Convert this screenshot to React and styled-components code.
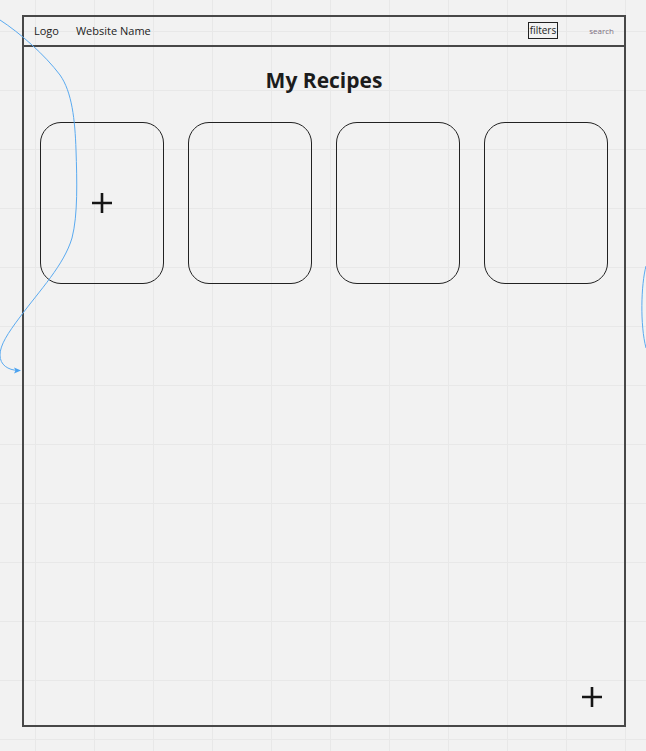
import React from 'react';
import styled, { createGlobalStyle } from 'styled-components';

const GlobalStyle = createGlobalStyle`
  html, body {
    margin: 0;
    padding: 0;
  }
  body {
    background-color: #f2f2f2;
    background-image:
      linear-gradient(to right, #e8e8e8 1px, transparent 1px),
      linear-gradient(to bottom, #e8e8e8 1px, transparent 1px);
    background-size: 59px 59px;
    background-position: 35px 31px;
    font-family: 'Open Sans', 'Liberation Sans', sans-serif;
    color: #1f1f1f;
  }
`;

const Canvas = styled.div`
  position: relative;
  width: 646px;
  height: 751px;
  overflow: hidden;
  padding: 15px 0 0 22px;
  box-sizing: border-box;
`;

const Frame = styled.div`
  position: relative;
  width: 604px;
  height: 712px;
  box-sizing: border-box;
  border: 2px solid #484848;
  display: flex;
  flex-direction: column;
`;

const TopBar = styled.div`
  display: flex;
  align-items: center;
  height: 30px;
  box-sizing: border-box;
  border-bottom: 2px solid #484848;
  padding: 0 10px 1px;
`;

const NavText = styled.span`
  font-size: 11px;
  color: #222;
  margin-right: ${(p) => p.gap || 0}px;
`;

const Spacer = styled.div`
  flex: 1;
`;

const FilterBox = styled.span`
  font-size: 10px;
  line-height: 15px;
  padding: 0 1px;
  border: 1px solid #222;
  color: #222;
  margin-right: 31px;
`;

const SearchText = styled.span`
  font-size: 8px;
  color: #7c6f80;
`;

const Title = styled.h1`
  margin: 19px 0 0;
  text-align: center;
  font-size: 21px;
  font-weight: 700;
  color: #1c1c1c;
  line-height: 28px;
`;

const CardGrid = styled.div`
  display: grid;
  grid-template-columns: repeat(4, 124px);
  gap: 24px;
  padding: 0 16px;
  margin-top: 28px;
`;

const Card = styled.div`
  height: 162px;
  box-sizing: border-box;
  border: 1.5px solid #222;
  border-radius: 21px;
  display: flex;
  align-items: center;
  justify-content: center;
`;

const Plus = styled.svg`
  width: 20px;
  height: 20px;
  display: block;
`;

const AddButton = styled.div`
  position: absolute;
  right: 22px;
  bottom: 18px;
`;

const Wires = styled.svg`
  position: absolute;
  left: 0;
  top: 0;
  pointer-events: none;
`;

const PlusIcon = () => (
  <Plus viewBox="0 0 20 20">
    <path d="M10 0V20M0 10H20" stroke="#151515" strokeWidth="2.6" fill="none" />
  </Plus>
);

const App = () => {
  const cards = [true, false, false, false];

  return (
    <Canvas>
      <GlobalStyle />
      <Frame>
        <TopBar>
          <NavText gap={17}>Logo</NavText>
          <NavText>Website Name</NavText>
          <Spacer />
          <FilterBox>filters</FilterBox>
          <SearchText>search</SearchText>
        </TopBar>
        <Title>My Recipes</Title>
        <CardGrid>
          {cards.map((hasPlus, i) => (
            <Card key={i}>{hasPlus && <PlusIcon />}</Card>
          ))}
        </CardGrid>
        <AddButton>
          <PlusIcon />
        </AddButton>
      </Frame>
      <Wires width="646" height="751" viewBox="0 0 646 751">
        <path
          d="M0 20 C20 33 45 55 60 75 C72 92 75 120 76 150 C77 180 78 215 72 238 C64 265 40 290 20 317 C8 333 0 345 0 355 C0 365 8 370 18 370.5"
          stroke="#5aaaf0"
          strokeWidth="1"
          fill="none"
        />
        <path d="M21 370.5 L14 367.5 L15.5 370.5 L14 373.5 Z" fill="#4aa2f0" />
        <path d="M646 266 C641 285 640 325 646 348" stroke="#5aaaf0" strokeWidth="1" fill="none" />
      </Wires>
    </Canvas>
  );
};

export default App;
